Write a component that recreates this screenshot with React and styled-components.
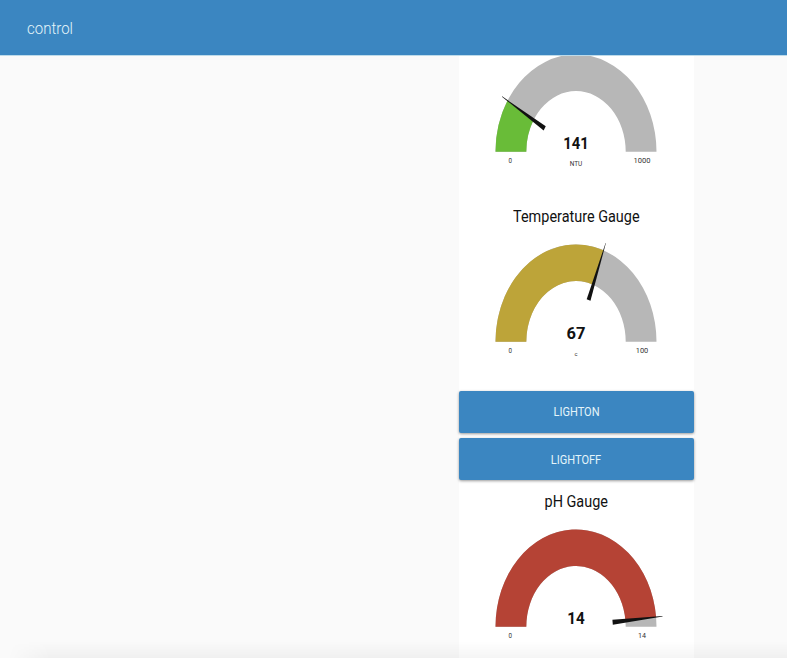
import React from "react";
import styled, { createGlobalStyle } from "styled-components";

const GlobalStyle = createGlobalStyle`
  * { box-sizing: border-box; }
  body {
    margin: 0;
    overflow: hidden;
    background: #fafafa;
    font-family: Roboto, "Liberation Sans", sans-serif;
  }
`;

const Page = styled.div`
  display: flex;
  flex-direction: column;
  height: 658px;
  width: 787px;
  overflow: hidden;
`;

const Header = styled.header`
  display: flex;
  align-items: center;
  flex: 0 0 55px;
  padding: 2px 27px 0;
  background: #3b86c1;
  box-shadow: 0 1px 0 #bddbea;
  color: #e4f5fa;
  z-index: 1;
`;

const Label = styled.span`
  display: inline-block;
  white-space: nowrap;
  transform: scaleX(${(p) => p.$stretch});
  transform-origin: ${(p) => p.$origin || "center"};
`;

const AppName = styled(Label)`
  font-size: 16.5px;
  font-weight: 300;
`;

const Main = styled.main`
  flex: 1;
  min-height: 0;
  padding-left: 458.5px;
  overflow: hidden;
`;

const Panel = styled.div`
  width: 235.5px;
  margin-top: -13px;
  background: #fff;
`;

const GaugeCard = styled.section`
  display: flex;
  flex-direction: column;
`;

const GaugeTitle = styled.h2`
  height: 32px;
  margin: 0;
  font-size: 16.5px;
  font-weight: 400;
  line-height: 33px;
  text-align: center;
  color: #111;
`;

const Dial = styled.svg`
  display: block;
  width: 235.5px;
  height: 158px;
  overflow: visible;
`;

const Value = styled.text`
  font-size: 17.3px;
  font-weight: 700;
  fill: #111;
  text-anchor: middle;
`;

const Caption = styled.text`
  font-size: ${(p) => p.$size || 8}px;
  fill: #333;
  text-anchor: middle;
`;

const Buttons = styled.div`
  display: grid;
  gap: 5px;
  padding: 1px 0 5px;
`;

const Button = styled.button`
  height: 42px;
  padding: 0 0 ${(p) => p.$lift || 0}px;
  border: 0;
  border-radius: 2px;
  background: #3b86c1;
  box-shadow: 0 1px 3px rgba(0, 0, 0, 0.4);
  color: #e4f5fa;
  font: 400 12.7px Roboto, "Liberation Sans", sans-serif;
`;

const BottomShade = styled.div`
  position: fixed;
  left: 0;
  right: 0;
  bottom: 0;
  height: 17px;
  background: linear-gradient(transparent, rgba(0, 0, 0, 0.04));
  mask-image: linear-gradient(90deg, transparent 8px, #000 50px);
  pointer-events: none;
`;

const RX = 80.5;
const RY = 97.2;

const point = (deg, rx, ry) => {
  const a = (deg * Math.PI) / 180;
  return `${-Math.cos(a) * rx} ${-Math.sin(a) * ry}`;
};

const ring = (from, to) =>
  `M${point(from, RX, RY)} A${RX} ${RY} 0 0 1 ${point(to, RX, RY)} ` +
  `L${point(to, 49.7, 60.7)} A49.7 60.7 0 0 0 ${point(from, 49.7, 60.7)}Z`;

function Gauge({ title, value, valueWidth, max, maxWidth, unit, unitWidth, unitSize, angle, color }) {
  return (
    <GaugeCard>
      {title && (
        <GaugeTitle>
          <Label $stretch={0.875}>{title}</Label>
        </GaugeTitle>
      )}
      <Dial viewBox="-117 -109.7 235.5 158">
        <path d={ring(0, 180)} fill="#b7b7b7" />
        <path d={ring(0, angle)} fill={color} />
        <g transform={`scale(${RX} ${RY}) rotate(${angle})`}>
          <polygon points="-1.08,-0.002 -1.08,0.002 -0.457,0.025 -0.457,-0.025" fill="#111" />
        </g>
        <Value x="0" y="-2.5" textLength={valueWidth} lengthAdjust="spacingAndGlyphs">{value}</Value>
        <Caption x="-65.8" y="11.5" $size={6.5} textLength="3.5" lengthAdjust="spacingAndGlyphs">0</Caption>
        <Caption x="66" y="11.7" textLength={maxWidth} lengthAdjust="spacingAndGlyphs">{max}</Caption>
        {unit && (
          <Caption x="0" y="14.5" $size={unitSize} textLength={unitWidth} lengthAdjust="spacingAndGlyphs">{unit}</Caption>
        )}
      </Dial>
    </GaugeCard>
  );
}

export default function App() {
  return (
    <>
      <GlobalStyle />
      <Page>
        <Header>
          <AppName $stretch={0.91} $origin="left">control</AppName>
        </Header>
        <Main>
          <Panel>
            <Gauge value="141" valueWidth={25.5} max="1000" maxWidth={17}
              unit="NTU" unitWidth={12.5} unitSize={8} angle={31.7} color="#69bc38" />
            <Gauge title="Temperature Gauge" value="67" valueWidth={19} max="100" maxWidth={12.5}
              unit="c" unitWidth={3} unitSize={6} angle={110} color="#bda439" />
            <Buttons>
              <Button $lift={2}><Label $stretch={0.87}>LIGHTON</Label></Button>
              <Button><Label $stretch={0.87}>LIGHTOFF</Label></Button>
            </Buttons>
            <Gauge title="pH Gauge" value="14" valueWidth={17.5} max="14" maxWidth={8}
              angle={174.3} color="#b54335" />
          </Panel>
        </Main>
        <BottomShade />
      </Page>
    </>
  );
}
